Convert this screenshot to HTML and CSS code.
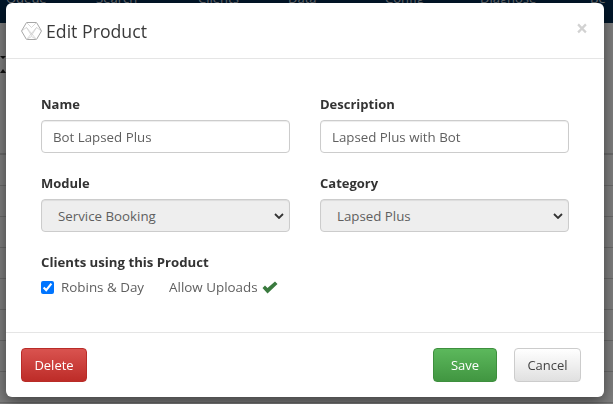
FILE: index.html
```html
<!DOCTYPE html>
<html lang="en">
<head>
<meta charset="utf-8">
<title>Edit Product</title>
<link rel="stylesheet" href="styles.css">
</head>
<body>
<div class="page">
  <nav class="navbar">
    <span class="nav-item q">Queue</span>
    <span class="nav-item s">Search</span>
    <span class="nav-item c">Clients</span>
    <span class="nav-item d">Data</span>
    <span class="nav-item f">Config</span>
    <span class="nav-item g">Diagnose</span>
    <span class="nav-item b">Be</span>
  </nav>
  <div class="rows">
    <span class="mark mark-down"></span>
    <span class="mark mark-up"></span>
    <div class="row head"></div><div class="row"></div><div class="row"></div><div class="row"></div>
    <div class="row"></div><div class="row"></div><div class="row"></div><div class="row"></div>
    <div class="row"></div>
  </div>
</div>
<div class="backdrop"></div>
<div class="modal">
  <header class="modal-header">
    <svg class="logo" width="23" height="20" viewBox="0 0 23 20" fill="none" stroke="#a6a6a6" stroke-width="1">
      <path d="M6.500 1.500h10l5 8.500-5 8.500h-10l-5-8.500z"/>
      <path d="M6.500 1.500l5 5 5-5M1.500 10l5-3.500 5 8 5-8 5 3.500M6.500 18.500l5-3 5 3M6.500 6.500l10 12M16.500 6.500l-10 12" stroke="#cfcfcf" stroke-width=".8"/>
    </svg>
    <h1 class="title">Edit Product</h1>
    <span class="close">×</span>
  </header>
  <div class="modal-body">
    <div class="grid">
      <div class="field">
        <label class="label">Name</label>
        <input class="control" type="text" value="Bot Lapsed Plus">
      </div>
      <div class="field">
        <label class="label">Description</label>
        <input class="control" type="text" value="Lapsed Plus with Bot">
      </div>
      <div class="field">
        <label class="label">Module</label>
        <div class="select-box">Service Booking
          <svg class="caret" width="10" height="6" viewBox="0 0 10 6" fill="none" stroke="#333" stroke-width="1.800"><path d="M1 1l4 4 4-4"/></svg>
        </div>
      </div>
      <div class="field">
        <label class="label">Category</label>
        <div class="select-box">Lapsed Plus
          <svg class="caret" width="10" height="6" viewBox="0 0 10 6" fill="none" stroke="#333" stroke-width="1.800"><path d="M1 1l4 4 4-4"/></svg>
        </div>
      </div>
    </div>
    <div class="clients">
      <div class="label clients-title">Clients using this Product</div>
      <div class="client-row">
        <input class="check" type="checkbox" checked>
        <span class="client-name">Robins &amp; Day</span>
        <span class="uploads">Allow Uploads</span>
        <svg class="tick" width="16" height="13" viewBox="0 0 16 13"><path d="M0.500 7l2.500-2.500 2.500 2.500 7.500-6.500 2.500 2.500-10 9.500z" fill="#3a7a3e"/></svg>
      </div>
    </div>
  </div>
  <footer class="modal-footer">
    <button class="btn delete">Delete</button>
    <div class="actions">
      <button class="btn save">Save</button>
      <button class="btn cancel">Cancel</button>
    </div>
  </footer>
</div>
</body>
</html>
```
FILE: styles.css
```css
* { box-sizing: border-box; }
html, body { margin: 0; height: 100%; overflow: hidden; }
body { font-family: "Open Sans", "Noto Sans", sans-serif; color: #333; background: #fff; }
.page { height: 404px; overflow: hidden; }
.navbar {
  height: 23px; background: #032c52; color: #cfd8e0; position: relative; overflow: hidden; font-size: 13px;
}
.nav-item { position: absolute; top: -11px; }
.q { left: 6px; } .s { left: 96px; } .c { left: 198px; } .d { left: 288px; }
.f { left: 385px; } .g { left: 480px; } .b { left: 590px; }
.rows { padding-top: 100px; position: relative; }
.row { height: 31px; border-bottom: 1px solid #d6d6d6; }
.head { height: 32px; border-bottom-width: 2px; }
.mark { position: absolute; left: 0; width: 0; height: 0; border-left: 3px solid transparent; border-right: 3px solid transparent; }
.mark-down { top: 33px; border-top: 3px solid #222; }
.mark-up { top: 46px; border-bottom: 4px solid #222; }
.backdrop { position: fixed; inset: 0; background: rgba(0,0,0,.5); }
.modal {
  position: fixed; left: 6px; top: 3px; width: 598px; height: 394px; background: #fff;
  border-radius: 6px; box-shadow: 0 5px 15px rgba(0,0,0,.5);
  display: flex; flex-direction: column;
}
.modal-header {
  height: 56px; border-bottom: 1px solid #e5e5e5; display: flex; align-items: center;
  padding: 0 15px; flex: none;
}
.logo { margin-right: 3px; margin-left: -1px; flex: none; }
.title { margin: 0; font-size: 17.700px; font-weight: 400; color: #3a3a3a; line-height: 24px; flex: 1; }
.close { font-size: 21px; line-height: 1; color: #d2d2d2; font-weight: 700; margin: -5px 1px 0 0; }
.modal-body { flex: 1; padding: 36px 35px 0; }
.grid { display: grid; grid-template-columns: 249px 249px; column-gap: 30px; row-gap: 21px; }
.label { display: block; font-size: 13px; font-weight: 700; line-height: 18px; color: #333; margin-bottom: 7px; }
.control, .select-box {
  width: 100%; height: 33px; border: 1px solid #ccc; border-radius: 4px;
  font: 13.300px/32px "Open Sans", "Noto Sans", sans-serif; color: #5f5f5f; display: block;
  box-shadow: inset 0 1px 1px rgba(0,0,0,.075);
}
.control { background: #fff; padding: 0 11px; }
.select-box { background: #eee; position: relative; padding: 0 16px; }
.caret { position: absolute; right: 5px; top: 13px; }
.clients { margin-top: 21px; }
.clients-title { margin-bottom: 6px; font-size: 13.200px; }
.client-row { display: flex; align-items: center; font-size: 13.400px; color: #5f5f5f; height: 20px; }
.check { margin: 0 7px 0 0; width: 13px; height: 13px; accent-color: #0075ff; }
.client-name { margin-right: 25px; }
.uploads { margin-right: 5px; }
.tick { flex: none; margin-left: -1px; }
.modal-footer {
  height: 65px; border-top: 1px solid #e5e5e5; display: flex; justify-content: space-between;
  padding: 15px 23px 0 15px; flex: none; align-items: flex-start;
}
.actions { display: flex; gap: 17px; }
.btn {
  height: 34px; border-radius: 4px; font: 13px "Open Sans", "Noto Sans", sans-serif; padding: 0; border: 1px solid;
}
.delete { width: 66px; color: #fff; background: linear-gradient(#d9534f, #bd2c28); border-color: #b92c28; }
.save { width: 64px; color: #fff; background: linear-gradient(#5cb85c, #419641); border-color: #3e8f3e; }
.cancel { width: 67px; color: #444; background: linear-gradient(#fff, #e0e0e0); border-color: #ccc; }
```
